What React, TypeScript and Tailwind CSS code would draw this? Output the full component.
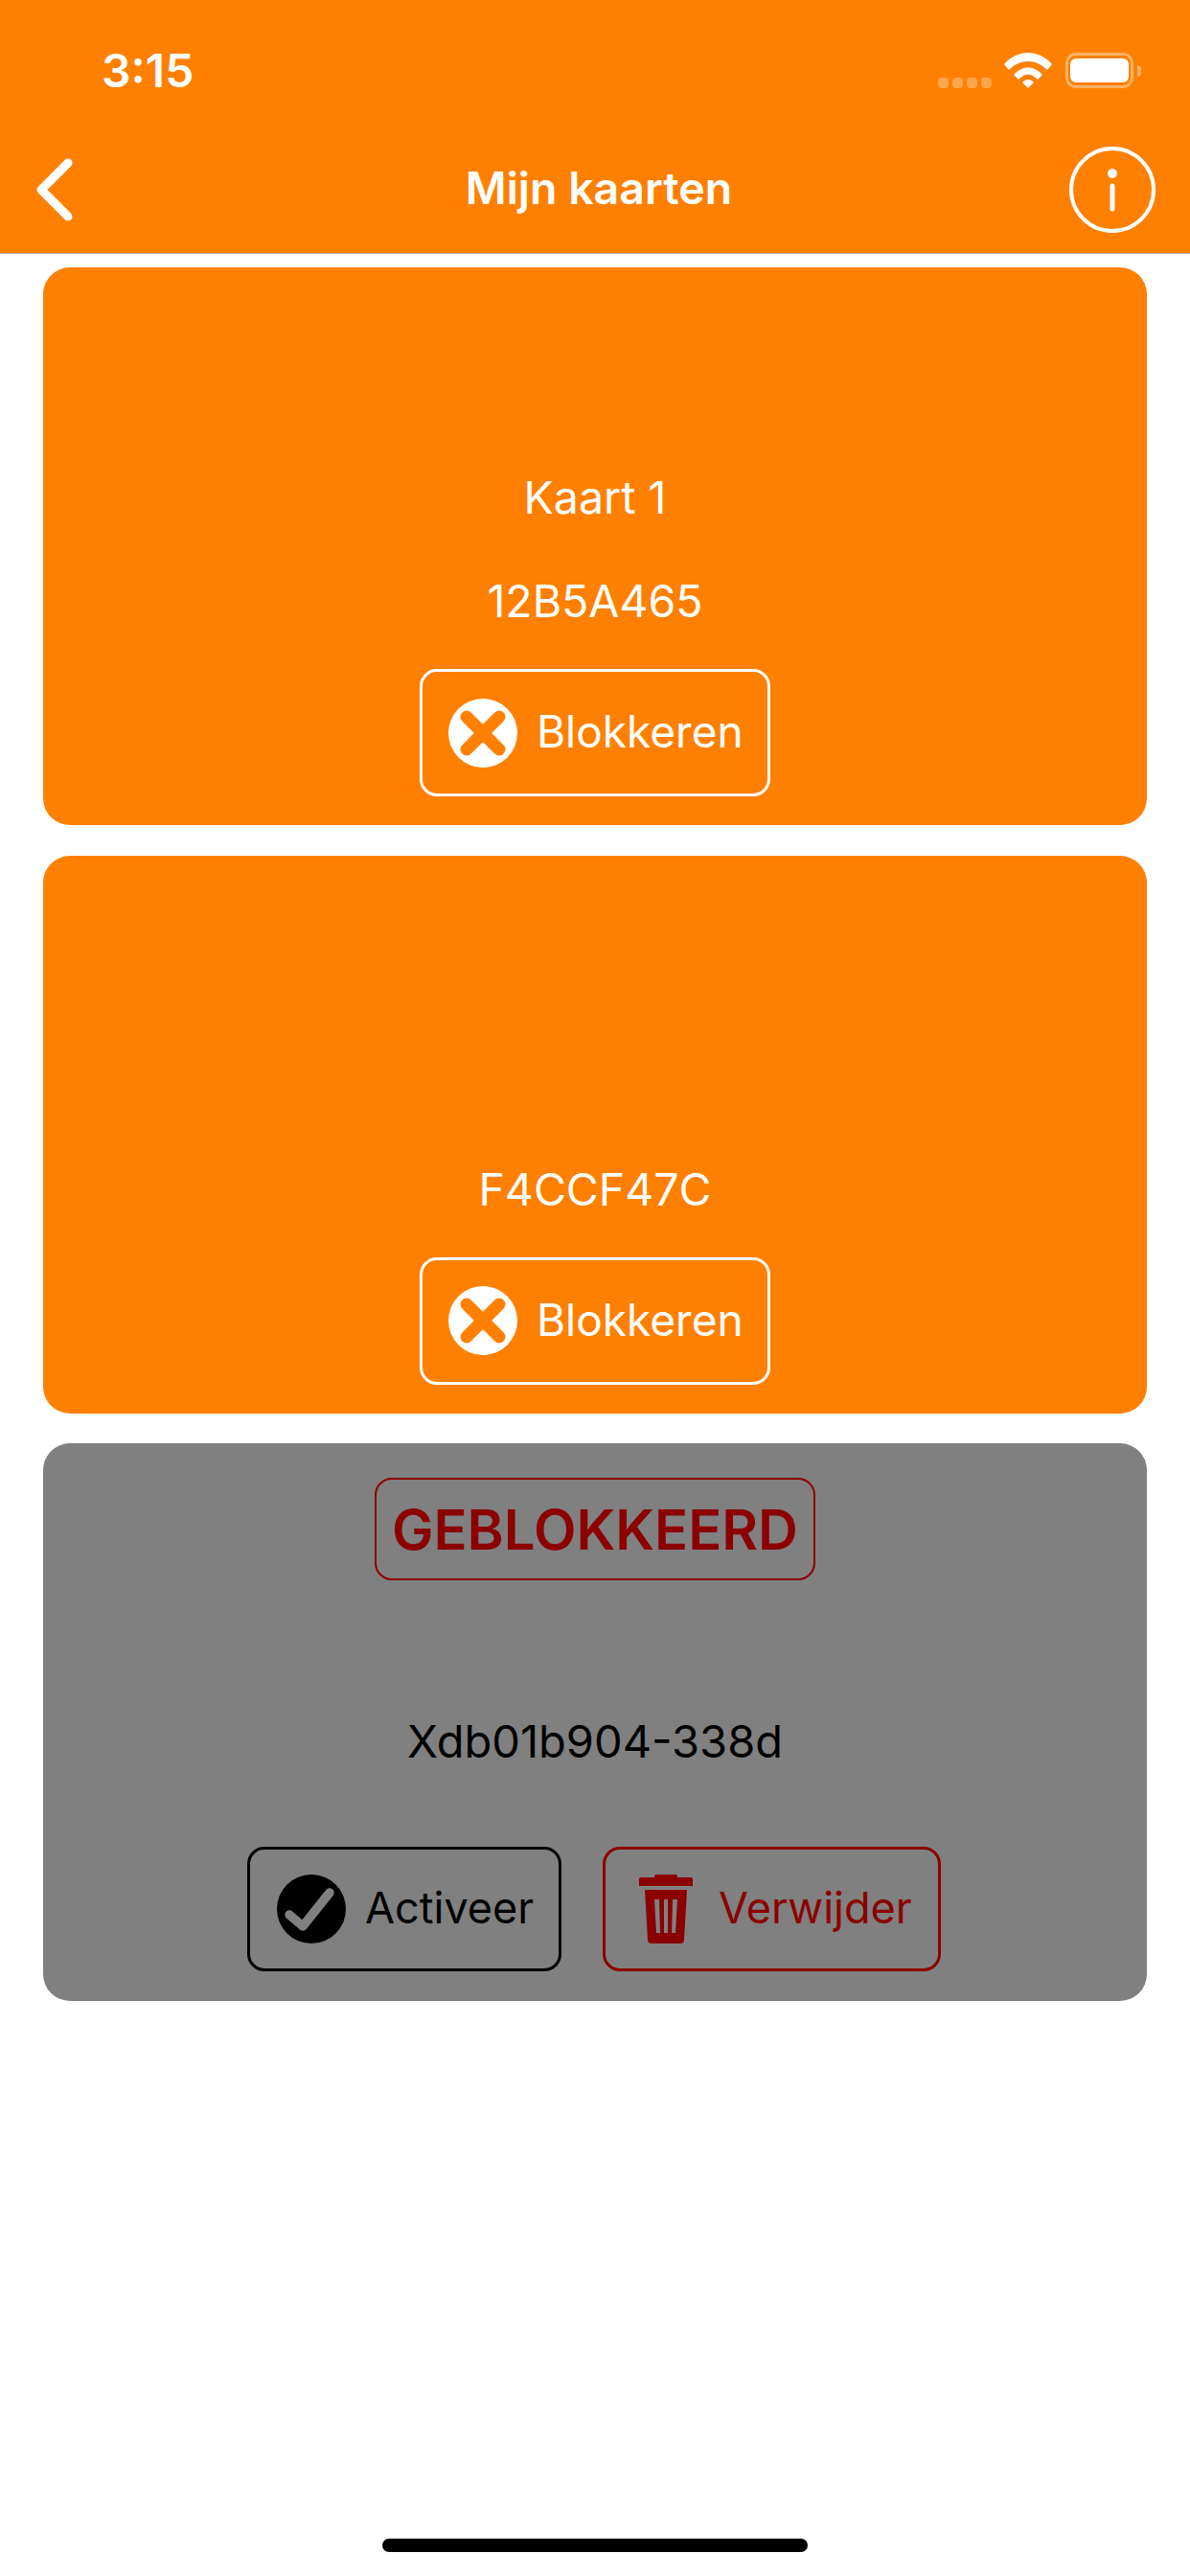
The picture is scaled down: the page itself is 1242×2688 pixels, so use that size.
import React from "react";

const font = { fontFamily: "Inter, 'Noto Sans', sans-serif" };

function XIcon() {
  return (
    <svg width="72" height="72" viewBox="0 0 72 72" className="shrink-0">
      <circle cx="36" cy="36" r="36" fill="#fff" />
      <path d="M19 19 L53 53 M53 19 L19 53" stroke="#ff8000" strokeWidth="13" strokeLinecap="round" />
    </svg>
  );
}

function CheckIcon() {
  return (
    <svg width="72" height="72" viewBox="0 0 72 72" className="shrink-0">
      <circle cx="36" cy="36" r="36" fill="#000" />
      <path d="M13 42 L27 54 L55 19" fill="none" stroke="#808080" strokeWidth="9.5" strokeLinecap="round" strokeLinejoin="round" />
    </svg>
  );
}

function TrashIcon() {
  return (
    <svg width="56" height="72" viewBox="0 0 56 72" className="shrink-0">
      <path d="M18 0 H38 Q40 0 40 3 H54 Q56 3 56 5 V12 H0 V5 Q0 3 2 3 H16 Q16 0 18 0 Z" fill="#8b0000" />
      <path fillRule="evenodd" d="M6 16 H50 L47 68 Q47 72 43 72 H13 Q9 72 9 68 Z M16 26 L18 61 H22 L21 26 Z M26 26 V61 H30 V26 Z M35 26 L34 61 H38 L40 26 Z" fill="#8b0000" />
    </svg>
  );
}

function Blokkeren() {
  return (
    <div className="flex h-[133px] w-[366px] items-center gap-[20px] rounded-[18px] border-[3px] border-white pl-[27px]">
      <XIcon />
      <span className="pb-[3px] text-[46px] leading-none text-white">Blokkeren</span>
    </div>
  );
}

function ActiveCard({ name, code }: { name?: string; code: string }) {
  return (
    <div className="flex h-[582px] w-[1152px] flex-col items-center rounded-[28px] bg-[#ff8000] pb-[30px] text-white">
      <div className="flex flex-1 flex-col items-center justify-end">
        {name && <div className="mb-[52px] text-[46.5px] leading-[56px]">{name}</div>}
        <div className="mb-[43px] text-[46.5px] leading-[56px]">{code}</div>
      </div>
      <Blokkeren />
    </div>
  );
}

export default function App() {
  return (
    <div style={font} className="relative flex h-[2688px] w-[1242px] flex-col overflow-hidden bg-white">
      <header className="h-[265px] shrink-0 border-b border-[#b3b3b3] bg-[#ff8000] text-white">
        <div className="flex h-[150px] items-start justify-between">
          <span className="ml-[106px] mt-[47px] text-[48px] font-semibold leading-[54px]">3:15</span>
          <div className="mr-[51px] mt-[55px] flex items-start">
            <div className="mr-[13px] mt-[26px] flex gap-[4px]">
              <span className="h-[11px] w-[11px] rounded-[4px] bg-white/30" />
              <span className="h-[11px] w-[11px] rounded-[4px] bg-white/30" />
              <span className="h-[11px] w-[11px] rounded-[4px] bg-white/30" />
              <span className="h-[11px] w-[11px] rounded-[4px] bg-white/30" />
            </div>
            <svg width="50" height="37" viewBox="0 0 50 37" className="mr-[14px]">
              <path d="M0 12 C14 -4 36 -4 50 12 L45 18 C33 6 17 6 5 18 Z" fill="#fff" />
              <path d="M10 23 C19 13 31 13 40 23 L35 28 C28 21 22 21 15 28 Z" fill="#fff" />
              <path d="M19 31 C22 27 28 27 31 31 L25 37 Z" fill="#fff" />
            </svg>
            <div className="flex items-center">
              <div className="flex h-[37px] w-[71px] items-center justify-center rounded-[11px] border-[3px] border-white/40">
                <div className="h-[25px] w-[61px] rounded-[6px] bg-white" />
              </div>
              <span className="ml-[4px] h-[12px] w-[4px] rounded-r-[4px] bg-white/40" />
            </div>
          </div>
        </div>
        <div className="grid h-[114px] grid-cols-[1fr_auto_1fr] items-start">
          <svg width="50" height="70" viewBox="0 0 50 70" className="ml-[33px] mt-[13px]">
            <path d="M38 7 L10 35 L38 63" fill="none" stroke="#fff" strokeWidth="9" strokeLinecap="round" strokeLinejoin="round" />
          </svg>
          <span className="ml-[8px] mt-[19px] text-[46.5px] font-semibold leading-[54px]">Mijn kaarten</span>
          <svg width="90" height="90" viewBox="0 0 90 90" className="mr-[36px] mt-[3px] justify-self-end">
            <circle cx="45" cy="45" r="43" fill="none" stroke="#fff" strokeWidth="4" />
            <circle cx="45" cy="28" r="5" fill="#fff" />
            <path d="M45 41 V65" stroke="#fff" strokeWidth="5" strokeLinecap="round" />
          </svg>
        </div>
      </header>

      <main className="flex flex-col items-center gap-[31.5px] pt-[14px]">
        <ActiveCard name="Kaart 1" code="12B5A465" />
        <ActiveCard code="F4CCF47C" />
        <div className="flex h-[582px] w-[1152px] flex-col items-center rounded-[28px] bg-[#808080] pb-[31px] pt-[36px]">
          <div className="flex h-[107px] w-[460px] items-center justify-center rounded-[18px] border-2 border-[#8b0000] text-[58px] font-semibold leading-none text-[#8b0000]">
            GEBLOKKEERD
          </div>
          <div className="flex flex-1 items-center justify-center pt-[57px] text-[47px] leading-none text-black">
            Xdb01b904-338d
          </div>
          <div className="flex gap-[43px] pr-[2px]">
            <div className="flex h-[130px] w-[328px] items-center gap-[20px] rounded-[18px] border-[3px] border-black pl-[28px]">
              <CheckIcon />
              <span className="pb-[3px] text-[45px] leading-none text-black">Activeer</span>
            </div>
            <div className="flex h-[130px] w-[353px] items-center gap-[27px] rounded-[18px] border-[3px] border-[#8b0000] pl-[35px]">
              <TrashIcon />
              <span className="pb-[3px] text-[45px] leading-none text-[#8b0000]">Verwijder</span>
            </div>
          </div>
        </div>
      </main>

      <div className="absolute bottom-[25px] left-[399px] h-[14px] w-[444px] rounded-full bg-black" />
    </div>
  );
}
